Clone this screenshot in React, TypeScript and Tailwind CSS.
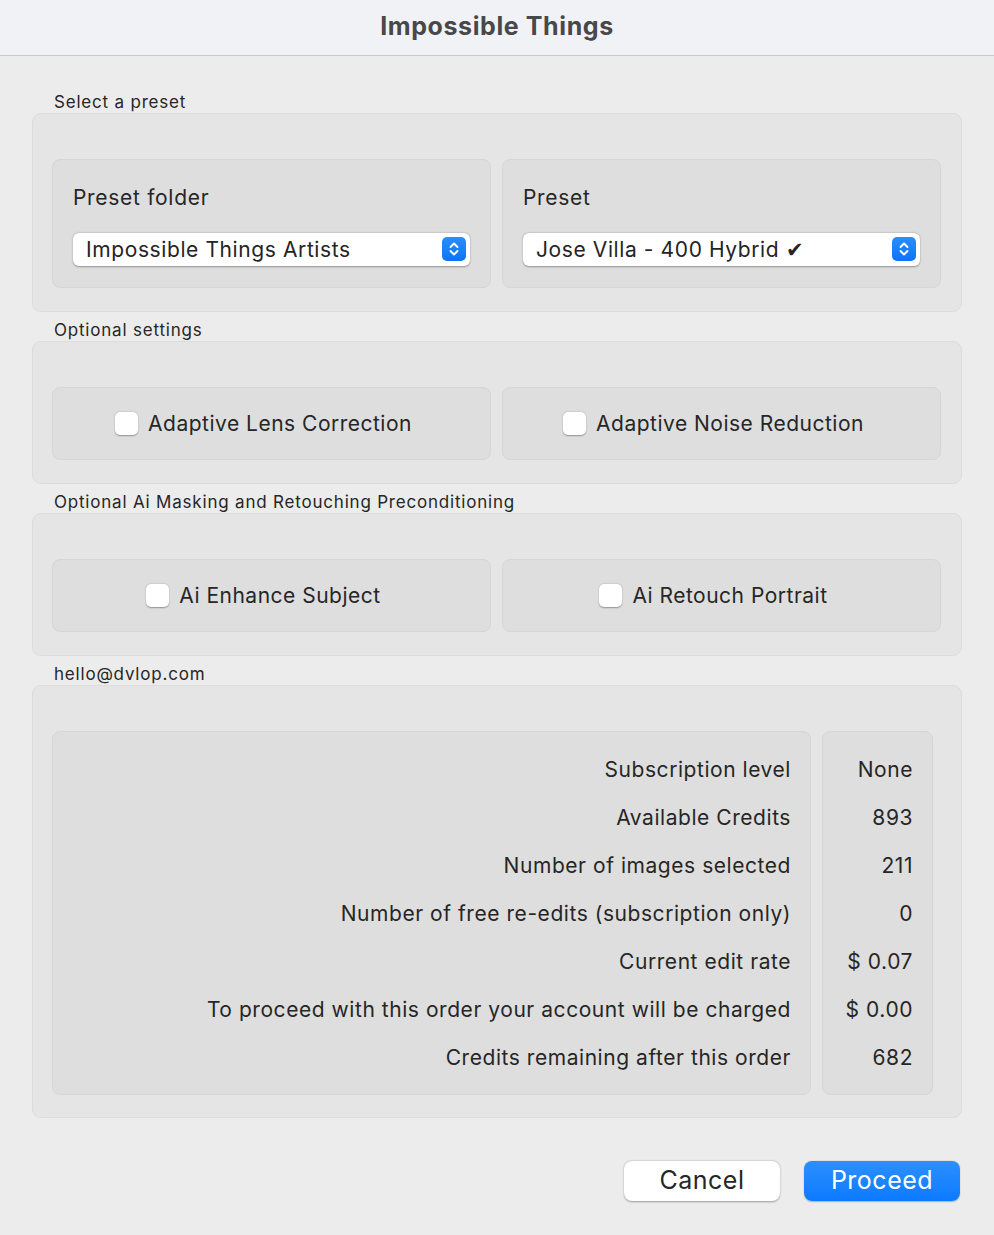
import React, { useState } from 'react';

const font = { fontFamily: 'Inter, "Noto Sans", "Liberation Sans", sans-serif' };

// Blue stepper glyph at the right of a popup button
const Stepper = () => (
  <span className="flex h-[24px] w-[24px] items-center justify-center rounded-[5px] bg-gradient-to-b from-[#2a8dff] to-[#0a74f5]">
    <svg width="12" height="16" viewBox="0 0 12 16" fill="none" stroke="white" strokeWidth="1.9" strokeLinecap="round" strokeLinejoin="round">
      <path d="M2.5 6 L6 2.5 L9.5 6" />
      <path d="M2.5 10 L6 13.5 L9.5 10" />
    </svg>
  </span>
);

const Popup = ({ value }: { value: string }) => (
  <div className="flex h-[33px] items-center justify-between rounded-[6px] bg-white pl-[13px] pr-[4px] shadow-[0_0.5px_2px_rgba(0,0,0,0.35)]">
    <span className="pt-[2px] text-[21px] tracking-[0.6px] text-[#242424]">{value}</span>
    <Stepper />
  </div>
);

const GroupLabel = ({ children, top }: { children: React.ReactNode; top: string }) => (
  <div className={`${top} h-[22px] pl-[22px] text-[17px] leading-[22px] tracking-[0.8px] text-[#262626]`}>{children}</div>
);

const Group = ({ children, className = '' }: { children: React.ReactNode; className?: string }) => (
  <div className={`rounded-[9px] border border-[#dcdcdc] bg-[#e5e5e5] ${className}`}>{children}</div>
);

const Inner = ({ children, className = '' }: { children: React.ReactNode; className?: string }) => (
  <div className={`rounded-[8px] border border-[#d6d6d6] bg-[#dedede] ${className}`}>{children}</div>
);

const Check = ({ label }: { label: string }) => {
  const [on, setOn] = useState(false);
  return (
    <Inner className="flex h-[73px] flex-1 items-center justify-center pr-[16px]">
      <button className="flex items-center gap-[10px]" onClick={() => setOn(!on)}>
        <span className="flex h-[23px] w-[23px] items-center justify-center rounded-[5px] bg-white shadow-[0_0.5px_1.5px_rgba(0,0,0,0.35)]">
          {on && (
            <svg width="14" height="14" viewBox="0 0 14 14" fill="none" stroke="#0a74f5" strokeWidth="2.2" strokeLinecap="round" strokeLinejoin="round">
              <path d="M2.5 7.5 L5.5 10.5 L11.5 3.5" />
            </svg>
          )}
        </span>
        <span className="text-[21px] tracking-[0.5px] text-[#262626]">{label}</span>
      </button>
    </Inner>
  );
};

const rows = [
  ['Subscription level', 'None'],
  ['Available Credits', '893'],
  ['Number of images selected', '211'],
  ['Number of free re-edits (subscription only)', '0'],
  ['Current edit rate', '$ 0.07'],
  ['To proceed with this order your account will be charged', '$ 0.00'],
  ['Credits remaining after this order', '682'],
];

export default function App() {
  return (
    <div style={font} className="flex h-[1235px] w-[994px] flex-col bg-[#ececec] text-[#262626]">
      {/* Title bar */}
      <div className="flex h-[56px] items-center justify-center border-b border-[#c9c9cc] bg-[#f1f2f5] pb-[2px]">
        <h1 className="text-[25px] font-bold tracking-[0.6px] text-[#48484a]">Impossible Things</h1>
      </div>

      <div className="flex flex-col px-[32px]">
        <GroupLabel top="mt-[35px]">Select a preset</GroupLabel>
        <Group className="flex gap-[11px] pb-[23px] pl-[19px] pr-[20px] pt-[45px]">
          <Inner className="h-[129px] flex-1 px-[20px] pt-[22px]">
            <div className="mb-[19px] text-[21px] tracking-[0.7px]">Preset folder</div>
            <Popup value="Impossible Things Artists" />
          </Inner>
          <Inner className="h-[129px] flex-1 px-[20px] pt-[22px]">
            <div className="mb-[19px] text-[21px] tracking-[0.7px]">Preset</div>
            <Popup value="Jose Villa - 400 Hybrid ✔" />
          </Inner>
        </Group>

        <GroupLabel top="mt-[7px]">Optional settings</GroupLabel>
        <Group className="flex gap-[11px] pb-[23px] pl-[19px] pr-[20px] pt-[45px]">
          <Check label="Adaptive Lens Correction" />
          <Check label="Adaptive Noise Reduction" />
        </Group>

        <GroupLabel top="mt-[7px]">Optional Ai Masking and Retouching Preconditioning</GroupLabel>
        <Group className="flex gap-[11px] pb-[23px] pl-[19px] pr-[20px] pt-[45px]">
          <Check label="Ai Enhance Subject" />
          <Check label="Ai Retouch Portrait" />
        </Group>

        <GroupLabel top="mt-[7px]">hello@dvlop.com</GroupLabel>
        <Group className="flex gap-[11px] pb-[22px] pl-[19px] pr-[28px] pt-[45px]">
          <Inner className="flex-1 pb-[12px] pr-[19px] pt-[14px]">
            {rows.map(([k]) => (
              <div key={k} className="flex h-[48px] items-center justify-end text-[21px] tracking-[0.55px]">{k}</div>
            ))}
          </Inner>
          <Inner className="w-[111px] pb-[12px] pr-[19px] pt-[14px]">
            {rows.map(([k, v]) => (
              <div key={k} className="flex h-[48px] items-center justify-end text-[21px] tracking-[0.55px]">{v}</div>
            ))}
          </Inner>
        </Group>

        <div className="mt-[43px] flex justify-end gap-[24px] pr-[2px]">
          <button className="h-[40px] w-[156px] rounded-[8px] bg-white text-[25px] tracking-[0.5px] text-[#262626] shadow-[0_0.5px_2px_rgba(0,0,0,0.35)]">
            Cancel
          </button>
          <button className="h-[40px] w-[156px] rounded-[8px] bg-gradient-to-b from-[#2b8fff] to-[#0a7aff] text-[25px] tracking-[0.5px] text-white shadow-[0_0.5px_1.5px_rgba(0,0,0,0.25)]">
            Proceed
          </button>
        </div>
      </div>
    </div>
  );
}
